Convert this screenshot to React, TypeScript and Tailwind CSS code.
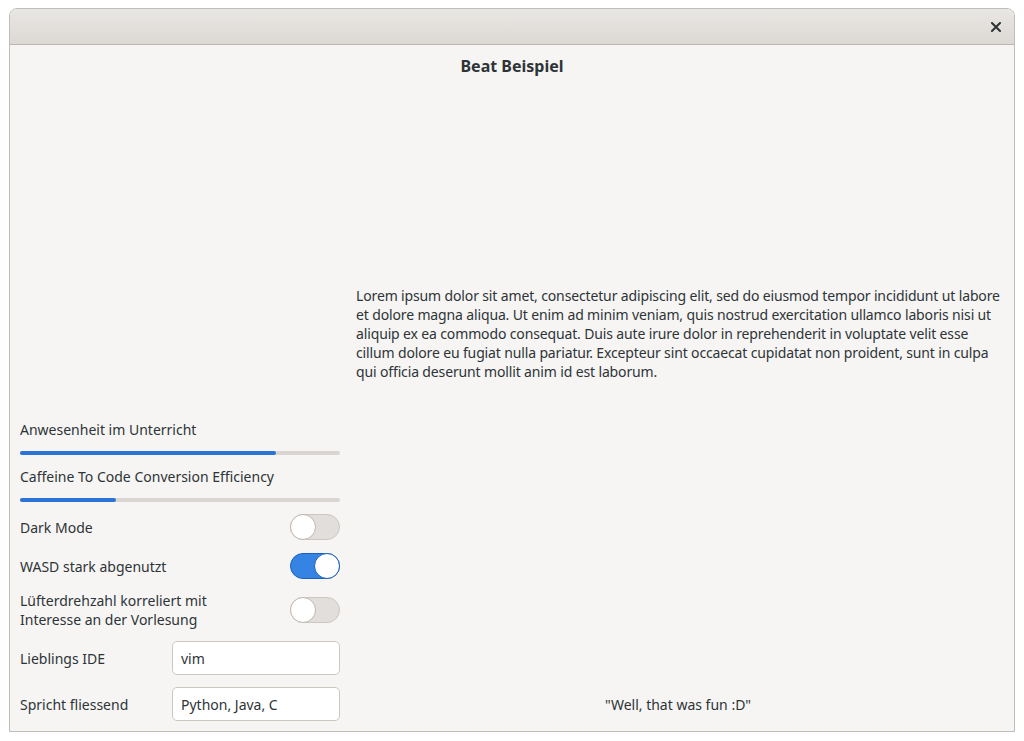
import { useState } from "react";

const font = { fontFamily: '"Noto Sans", "Open Sans", sans-serif' };

const lorem = [
  "Lorem ipsum dolor sit amet, consectetur adipiscing elit, sed do eiusmod tempor incididunt ut labore",
  "et dolore magna aliqua. Ut enim ad minim veniam, quis nostrud exercitation ullamco laboris nisi ut",
  "aliquip ex ea commodo consequat. Duis aute irure dolor in reprehenderit in voluptate velit esse",
  "cillum dolore eu fugiat nulla pariatur. Excepteur sint occaecat cupidatat non proident, sunt in culpa",
  "qui officia deserunt mollit anim id est laborum.",
];

function Progress({ label, value }: { label: string; value: number }) {
  return (
    <div className="flex flex-col">
      <div className="h-[20px] leading-[20px]">{label}</div>
      <div className="mt-[11px] h-[4px] w-full rounded-full bg-[#d9d5d1]">
        <div className="h-full rounded-full bg-[#2b73d6]" style={{ width: `${value}%` }} />
      </div>
    </div>
  );
}

function Switch({ on, onToggle }: { on: boolean; onToggle: () => void }) {
  return (
    <button
      onClick={onToggle}
      className={`relative h-[26px] w-[50px] shrink-0 rounded-full border ${
        on ? "border-[#1b5fbf] bg-[#3584e4]" : "border-[#cdc7c2] bg-[#e1dedb]"
      }`}
    >
      <span
        className={`absolute top-[-1px] h-[26px] w-[26px] rounded-full border bg-white ${
          on ? "right-[-1px] border-[#1b5fbf]" : "left-[-1px] border-[#bfb8b1]"
        }`}
      />
    </button>
  );
}

export default function App() {
  const [dark, setDark] = useState(false);
  const [wasd, setWasd] = useState(true);
  const [fan, setFan] = useState(false);
  const [ide, setIde] = useState("vim");
  const [langs, setLangs] = useState("Python, Java, C");

  return (
    <div className="h-[741px] w-[1024px] bg-white pl-[9px] pt-[8px]" style={font}>
      <div className="flex h-[724px] w-[1006px] flex-col overflow-hidden rounded-t-[8px] border border-[#c0bcb8] text-[14px] text-[#2e3436]">
        {/* titlebar */}
        <div className="flex h-[36px] shrink-0 items-center justify-end border-b border-[#bcb6b0] bg-gradient-to-b from-[#e9e7e4] to-[#dcd8d4] pr-[13px]">
          <svg width="10" height="10" viewBox="0 0 10 10">
            <path d="M1 1 L9 9 M9 1 L1 9" stroke="#2e3436" strokeWidth="2" strokeLinecap="square" />
          </svg>
        </div>

        <div className="flex flex-1 flex-col bg-[#f6f5f4] px-[10px] pb-[10px]">
          <div className="pt-[11px] text-center text-[16px] font-bold leading-[20px]">Beat Beispiel</div>

          <div className="flex flex-1 gap-[16px]">
            {/* left column */}
            <div className="flex w-[320px] shrink-0 flex-col justify-end">
              <Progress label="Anwesenheit im Unterricht" value={80} />
              <div className="mt-[12px]">
                <Progress label="Caffeine To Code Conversion Efficiency" value={30} />
              </div>
              <div className="mt-[12px] flex items-center justify-between">
                <span>Dark Mode</span>
                <Switch on={dark} onToggle={() => setDark(!dark)} />
              </div>
              <div className="mt-[13px] flex items-center justify-between">
                <span>WASD stark abgenutzt</span>
                <Switch on={wasd} onToggle={() => setWasd(!wasd)} />
              </div>
              <div className="mt-[12px] flex items-center justify-between">
                <span className="leading-[19px]">
                  Lüfterdrehzahl korreliert mit
                  <br />
                  Interesse an der Vorlesung
                </span>
                <Switch on={fan} onToggle={() => setFan(!fan)} />
              </div>
              <div className="mt-[12px] flex items-center">
                <span className="w-[152px]">Lieblings IDE</span>
                <input
                  value={ide}
                  onChange={(e) => setIde(e.target.value)}
                  className="h-[34px] w-[168px] rounded-[5px] border border-[#cdc7c2] bg-white px-[8px] outline-none"
                />
              </div>
              <div className="mt-[12px] flex items-center">
                <span className="w-[152px]">Spricht fliessend</span>
                <input
                  value={langs}
                  onChange={(e) => setLangs(e.target.value)}
                  className="h-[34px] w-[168px] rounded-[5px] border border-[#cdc7c2] bg-white px-[8px] outline-none"
                />
              </div>
            </div>

            {/* right column */}
            <div className="flex min-w-0 flex-1 flex-col pr-[4px]">
              <div className="pt-[210px] leading-[19px] tracking-[-0.14px]">
                {lorem.map((l) => (
                  <div key={l} className="whitespace-nowrap">{l}</div>
                ))}
              </div>
              <div className="mt-auto flex h-[34px] items-center justify-center">
                "Well, that was fun :D"
              </div>
            </div>
          </div>
        </div>
      </div>
    </div>
  );
}
